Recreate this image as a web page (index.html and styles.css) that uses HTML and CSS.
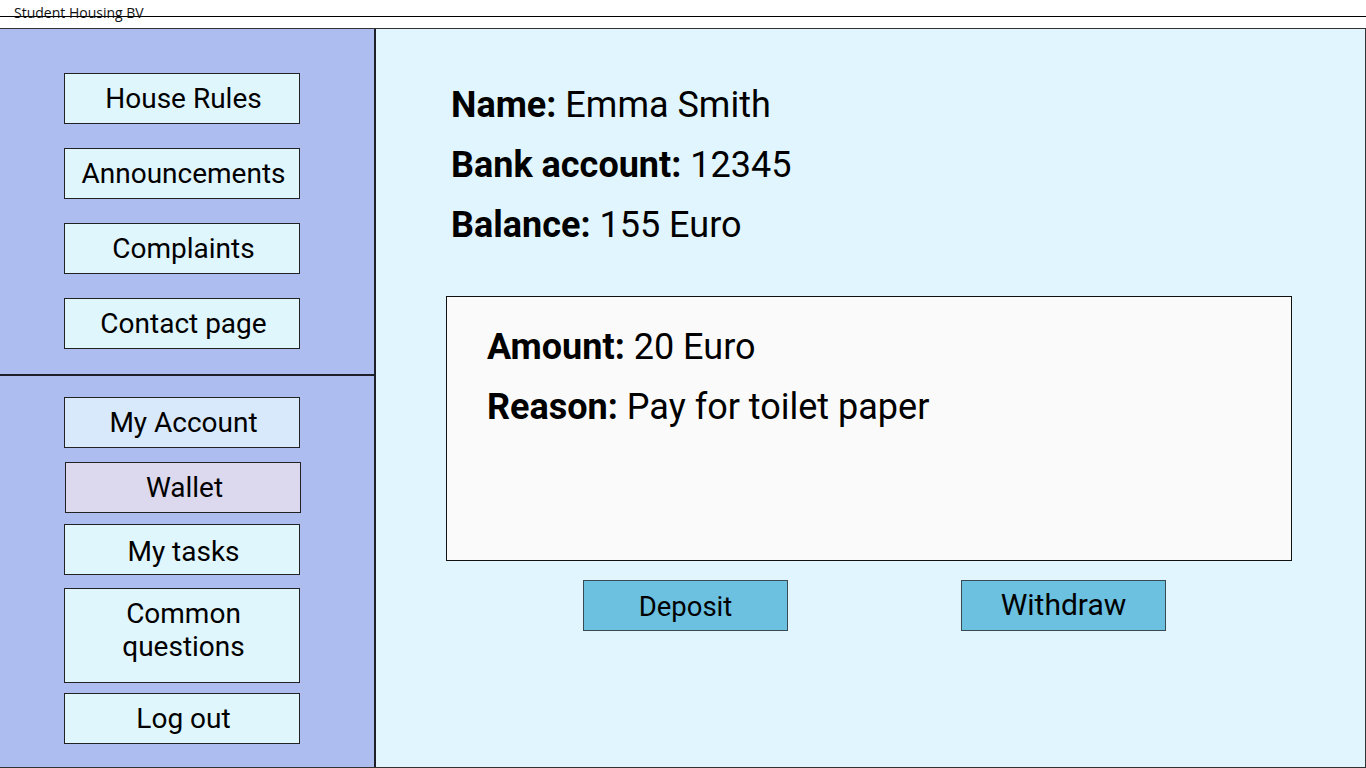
FILE: index.html
```html
<!DOCTYPE html>
<html lang="en">
<head>
<meta charset="utf-8">
<title>Student Housing BV - Wallet</title>
<link rel="stylesheet" href="styles.css">
</head>
<body>
<div class="titlebar">Student Housing BV</div>
<div class="frame">
  <aside class="sidebar">
    <nav class="side-section side-top">
      <a class="nav-btn">House Rules</a>
      <a class="nav-btn">Announcements</a>
      <a class="nav-btn">Complaints</a>
      <a class="nav-btn">Contact page</a>
    </nav>
    <nav class="side-section side-bottom">
      <a class="nav-btn nav-account">My Account</a>
      <a class="nav-btn nav-wallet">Wallet</a>
      <a class="nav-btn nav-tasks">My tasks</a>
      <a class="nav-btn nav-tall">Common<br>questions</a>
      <a class="nav-btn nav-logout">Log out</a>
    </nav>
  </aside>
  <main class="main">
    <div class="info">
      <p class="line"><b>Name:</b> Emma Smith</p>
      <p class="line"><b>Bank account:</b> 12345</p>
      <p class="line"><b>Balance:</b> 155 Euro</p>
    </div>
    <div class="tx-box">
      <p class="line"><b>Amount:</b> 20 Euro</p>
      <p class="line"><b>Reason:</b> Pay for toilet paper</p>
    </div>
    <div class="actions">
      <button class="action-btn btn-deposit">Deposit</button>
      <button class="action-btn btn-withdraw">Withdraw</button>
    </div>
  </main>
</div>
</body>
</html>
```

FILE: styles.css
```css
* { box-sizing: border-box; }

html, body {
  margin: 0;
  padding: 0;
  background: #ffffff;
}

body {
  width: 1366px;
  height: 768px;
  overflow: hidden;
  font-family: Roboto, "Liberation Sans", sans-serif;
  color: #000;
}

.titlebar {
  height: 17px;
  padding: 3px 0 0 14px;
  border-bottom: 1px solid #000;
  font-family: "Open Sans", "DejaVu Sans", sans-serif;
  font-size: 14px;
  line-height: 20px;
  color: #111;
  white-space: nowrap;
  margin-bottom: 11px;
}

.frame {
  display: flex;
  height: 740px;
  border-top: 1px solid #333;
  border-right: 1px solid #333;
  border-bottom: 1px solid #333;
}

.sidebar {
  width: 376px;
  flex: none;
  display: flex;
  flex-direction: column;
  background: #adbdf0;
  border-right: 2px solid #1f1f2a;
}

.side-section {
  display: flex;
  flex-direction: column;
  align-items: flex-start;
  padding-left: 64px;
}

.side-top {
  height: 347px;
  padding-top: 44px;
  gap: 24px;
  border-bottom: 2px solid #1f1f2a;
}

.side-bottom {
  padding-top: 21px;
}

.nav-btn {
  width: 236px;
  height: 51px;
  display: flex;
  align-items: center;
  justify-content: center;
  text-align: center;
  background: #e0f6fd;
  border: 1px solid #222;
  font-size: 28px;
  line-height: 33px;
  color: #000;
  padding-left: 3px;
}

.nav-account { background: #d7e9fb; }
.nav-wallet { background: #dcd8ee; margin-top: 14px; margin-left: 1px; }
.nav-tasks { margin-top: 11px; padding-top: 4px; }
.nav-tall { height: 95px; margin-top: 13px; padding-bottom: 12px; }
.nav-logout { margin-top: 10px; }

.main {
  flex: 1;
  background: #e0f5fd;
  padding: 46px 0 0 70px;
}

.line {
  margin: 0;
  font-size: 36px;
  line-height: 60px;
  white-space: nowrap;
}

.line b { font-weight: 700; }

.info { padding-left: 5px; }

.tx-box {
  margin-top: 41px;
  width: 846px;
  height: 265px;
  background: #fafafa;
  border: 1px solid #111;
  padding: 20px 0 0 40px;
}

.actions {
  display: flex;
  margin-top: 19px;
  padding-left: 137px;
  gap: 173px;
}

.action-btn {
  width: 205px;
  height: 51px;
  background: #6cc1e0;
  border: 1px solid #3a4a52;
  font-family: Roboto, "Liberation Sans", sans-serif;
  color: #000;
  padding: 0;
  display: flex;
  align-items: center;
  justify-content: center;
}

.btn-deposit { font-size: 27.5px; padding-top: 2px; }
.btn-withdraw { font-size: 30px; padding-bottom: 3px; }
```
